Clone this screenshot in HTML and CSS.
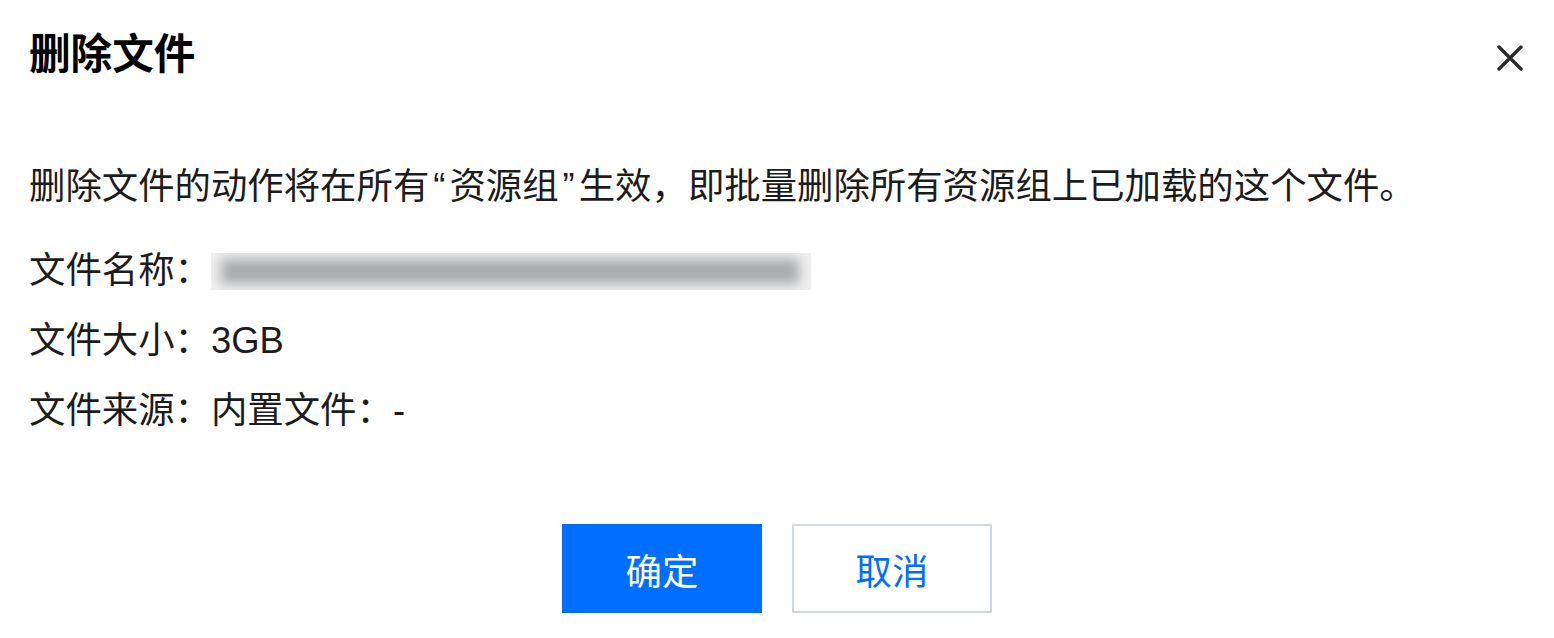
FILE: index.html
```html
<!DOCTYPE html>
<html lang="zh-CN">
<head>
<meta charset="utf-8">
<title>删除文件</title>
<link rel="stylesheet" href="styles.css">
</head>
<body>
<div class="dialog">
  <div class="header">
    <h1 class="title">删除文件</h1>
    <button class="close" aria-label="关闭">
      <svg width="26" height="26" viewBox="0 0 26 26"><path d="M2 2L24 24M24 2L2 24" stroke="#2b2b2b" stroke-width="3.4" stroke-linecap="round"/></svg>
    </button>
  </div>
  <div class="body">
    <p class="desc">删除文件的动作将在所有<span class="q">“</span>资源组<span class="q">”</span>生效，即批量删除所有资源组上已加载的这个文件。</p>
    <div class="row">文件名称：<span class="masked"><span class="masked-inner"></span></span></div>
    <div class="row">文件大小：3GB</div>
    <div class="row">文件来源：内置文件：-</div>
  </div>
  <div class="footer">
    <button class="btn btn-primary">确定</button>
    <button class="btn btn-default">取消</button>
  </div>
</div>
</body>
</html>
```
FILE: styles.css
```css
html, body {
  margin: 0;
  padding: 0;
  background: #fff;
}
body {
  font-family: "Liberation Sans", "Noto Sans CJK SC", sans-serif;
  color: #1c1c1c;
}
.dialog {
  padding: 0 29px;
}
.header {
  display: flex;
  justify-content: space-between;
  align-items: flex-start;
  padding-top: 25px;
}
.title {
  margin: 0;
  font-size: 41.6px;
  line-height: 60px;
  font-weight: 700;
  color: #000;
}
.close {
  margin-top: 18px;
  width: 30px;
  height: 30px;
  padding: 2px;
  border: 0;
  background: transparent;
  display: flex;
  align-items: center;
  justify-content: center;
}
.body {
  margin-top: 78px;
  font-size: 36.4px;
  line-height: 48px;
}
.desc {
  margin: 0;
}
.q {
  font-family: "Liberation Sans", sans-serif;
  padding: 0 4px;
}
.row {
  margin-top: 22px;
  display: flex;
  align-items: center;
  height: 48px;
}
.row:first-of-type {
  margin-top: 36px;
}
.masked {
  display: inline-block;
  width: 600px;
  height: 37px;
  background: #efefef;
  overflow: hidden;
}
.masked-inner {
  display: block;
  margin: 6px 12px 6px 10px;
  height: 25px;
  background: #a9acaf;
  filter: blur(6px);
}
.footer {
  display: flex;
  justify-content: center;
  gap: 30px;
  margin-top: 89px;
}
.btn {
  width: 200px;
  height: 89px;
  font-family: "Noto Sans CJK SC", sans-serif;
  font-size: 36.4px;
  border-radius: 0;
  cursor: pointer;
}
.btn-primary {
  background: #006eff;
  color: #fff;
  border: 1px solid #006eff;
}
.btn-default {
  background: #fff;
  color: #006eff;
  border: 2px solid #d1d8e0;
}
```
